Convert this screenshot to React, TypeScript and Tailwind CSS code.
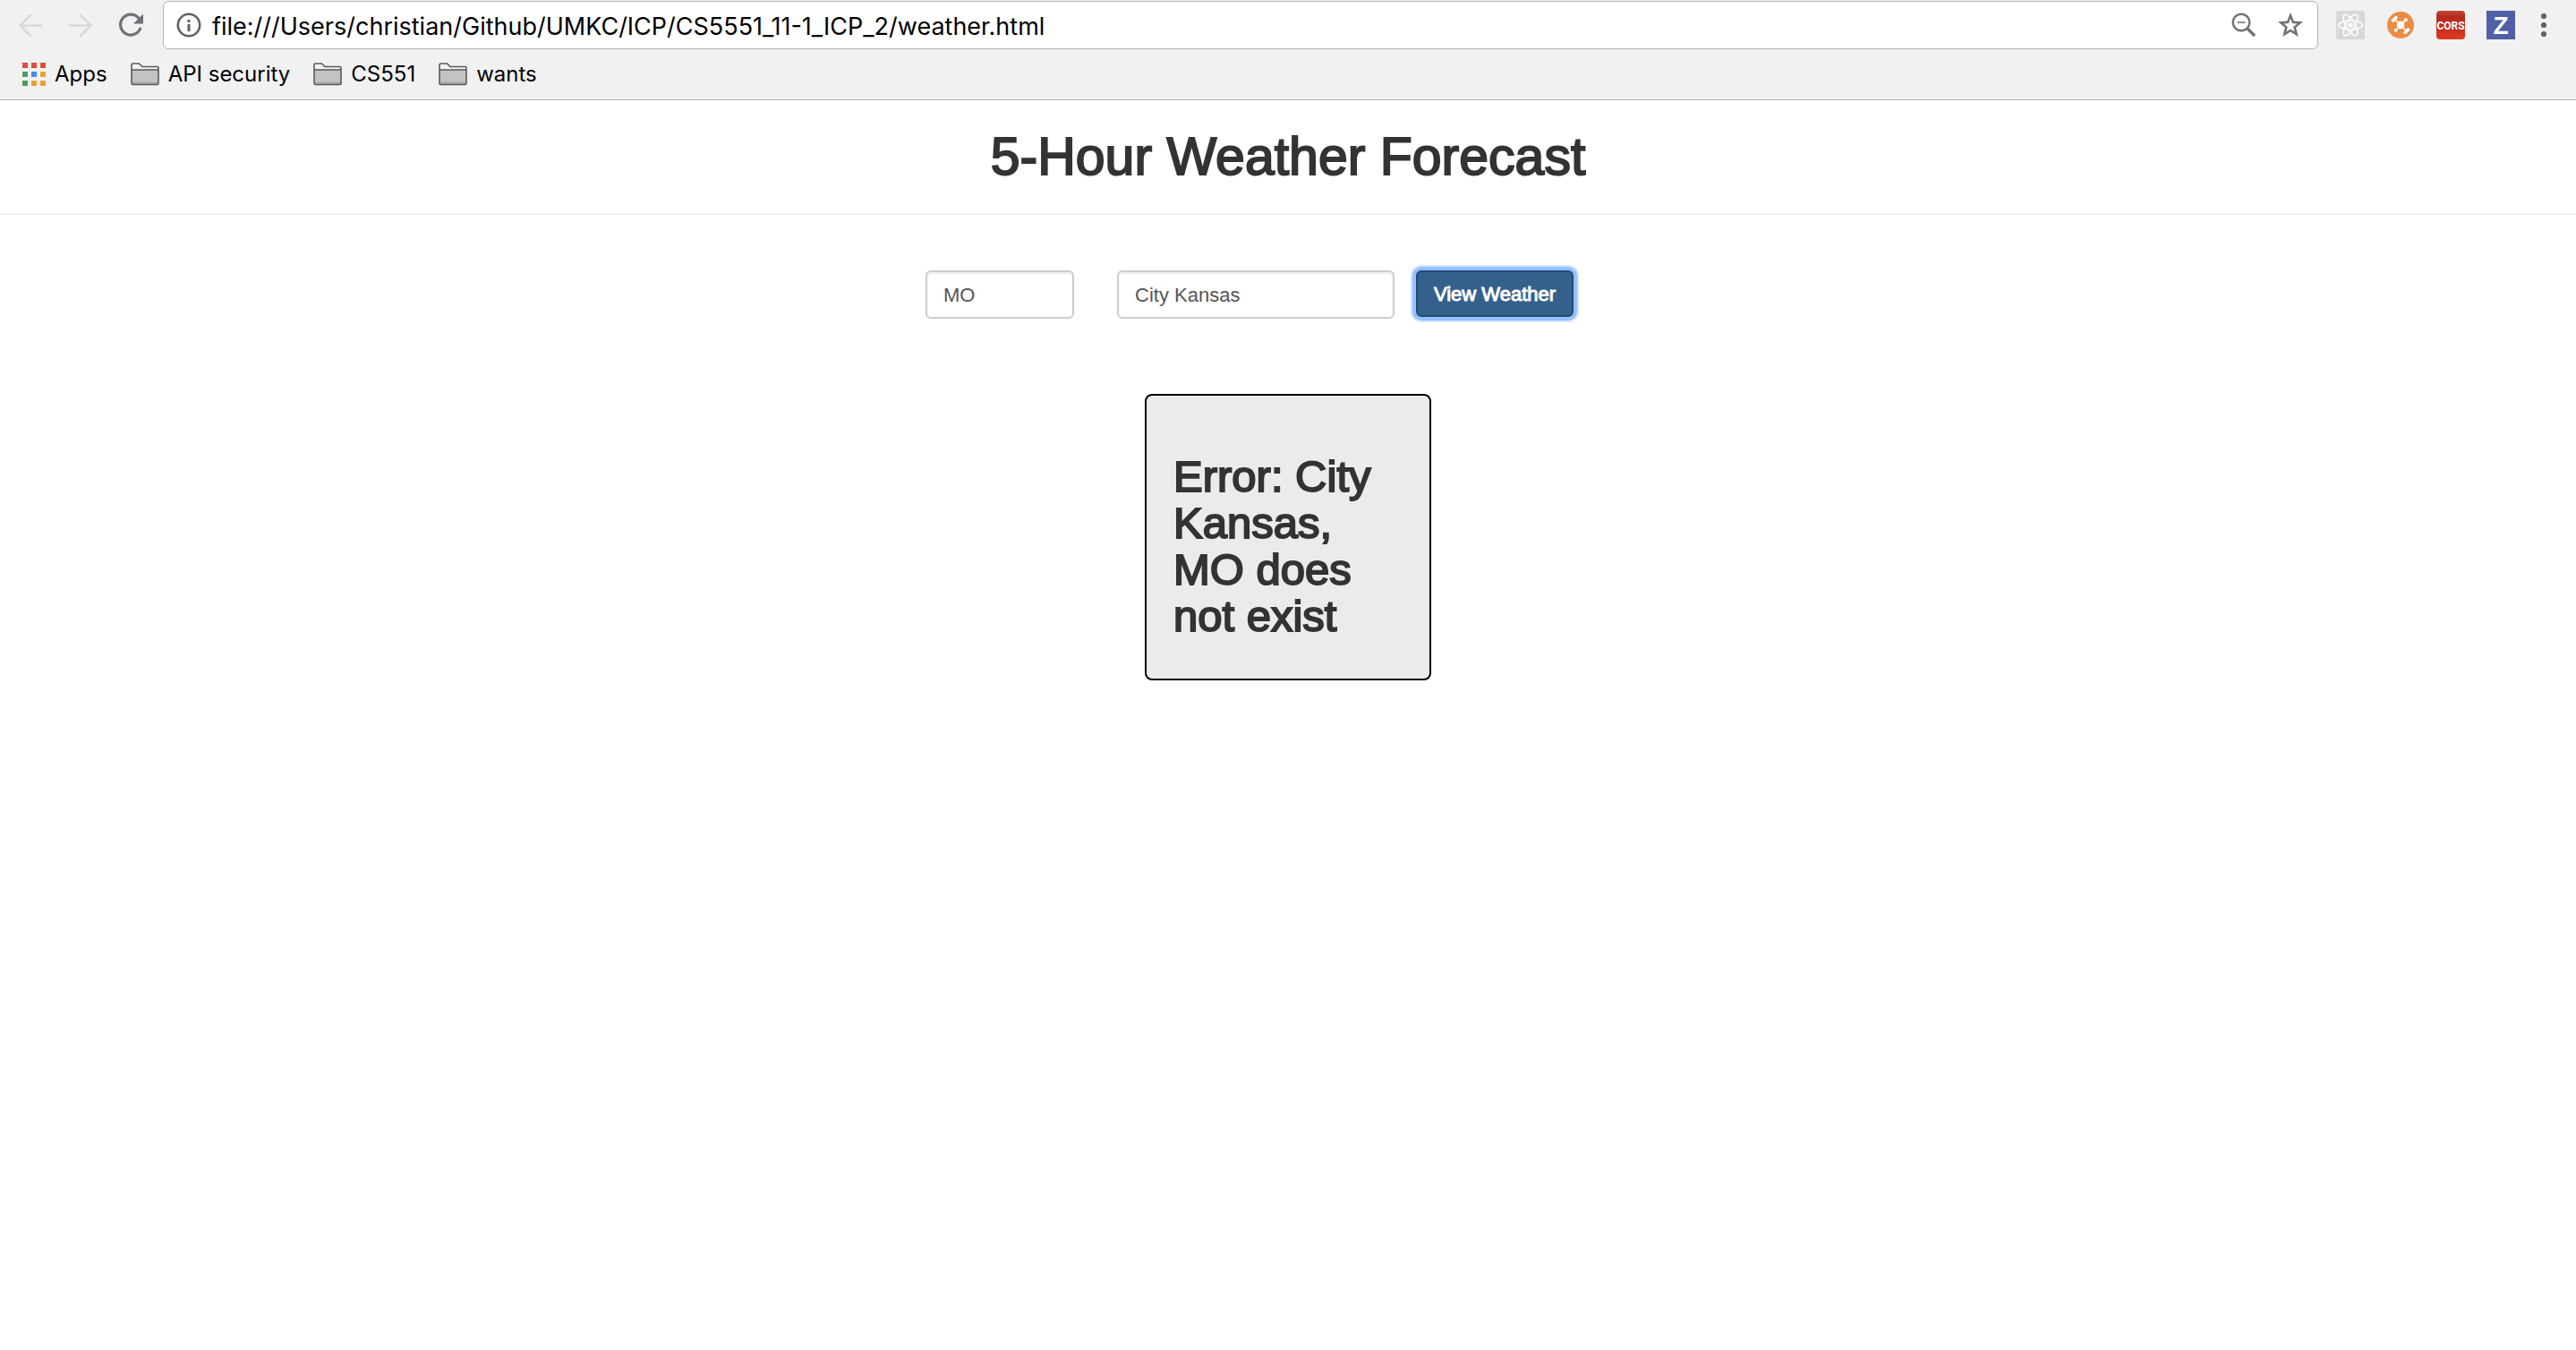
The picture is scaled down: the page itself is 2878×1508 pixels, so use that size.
import type { ReactNode } from 'react';

const uiFont = "font-['Inter','Roboto',sans-serif]";

function BackIcon() {
  return (
    <svg viewBox="0 0 32 32" className="size-8" fill="none" stroke="#d9d9d9" strokeWidth="2.6" aria-hidden="true">
      <path d="M28 16.5H5.5M16 5L4.5 16.5L16 28" strokeLinecap="round" strokeLinejoin="miter" />
    </svg>
  );
}

function ForwardIcon() {
  return (
    <svg viewBox="0 0 32 32" className="size-8" fill="none" stroke="#d9d9d9" strokeWidth="2.6" aria-hidden="true">
      <path d="M4 16.5H26.5M16 5L27.5 16.5L16 28" strokeLinecap="round" strokeLinejoin="miter" />
    </svg>
  );
}

function ReloadIcon() {
  return (
    <svg viewBox="0 0 32 32" className="size-8" fill="none" aria-hidden="true">
      <path d="M24.6 7.8A11.5 11.5 0 1 0 26.6 20.2" stroke="#6e7175" strokeWidth="3.2" strokeLinecap="round" />
      <path d="M30 3.5V14.5H19Z" fill="#6e7175" />
    </svg>
  );
}

function InfoIcon() {
  return (
    <svg viewBox="0 0 28 28" className="size-7 shrink-0" aria-hidden="true">
      <circle cx="14" cy="14" r="12.2" fill="none" stroke="#5f6368" strokeWidth="2.6" />
      <path d="M12.5 8h3v3h-3zM12.5 13h3v8h-3z" fill="#5f6368" />
    </svg>
  );
}

function ZoomOutIcon() {
  return (
    <svg viewBox="0 0 28 28" className="size-7" fill="none" stroke="#6e7175" aria-hidden="true">
      <circle cx="11" cy="11" r="9.3" strokeWidth="2.4" />
      <path d="M6.5 11h9" strokeWidth="1.6" />
      <path d="M17.5 17.5L26 26" strokeWidth="3.4" />
    </svg>
  );
}

function StarIcon() {
  return (
    <svg viewBox="0 0 28 28" className="size-7" fill="#6e7175" fillRule="evenodd" aria-hidden="true">
      <path d="M14 0L17.8 9.4L28 10.2L20.2 16.8L22.7 27L14 21.5L5.3 27L7.8 16.8L0 10.2L10.2 9.4ZM14 6.6L12 12L6.4 12.4L10.8 16L9.4 21.6L14 18.6L18.6 21.6L17.2 16L21.6 12.4L16 12Z" />
    </svg>
  );
}

function ReactIcon() {
  return (
    <svg viewBox="0 0 32 32" className="size-8" aria-hidden="true">
      <rect width="32" height="32" rx="2" fill="#d8d8d8" />
      <g fill="none" stroke="#fff" strokeWidth="1.5">
        <ellipse cx="16" cy="16" rx="13.3" ry="5" />
        <ellipse cx="16" cy="16" rx="13.3" ry="5" transform="rotate(60 16 16)" />
        <ellipse cx="16" cy="16" rx="13.3" ry="5" transform="rotate(120 16 16)" />
      </g>
      <circle cx="16" cy="16" r="2.8" fill="#fff" />
    </svg>
  );
}

function HubIcon() {
  return (
    <svg viewBox="0 0 32 32" className="size-8" aria-hidden="true">
      <circle cx="16" cy="16" r="15" fill="#ec8b42" />
      <g stroke="#fff" fill="none">
        <path d="M9 9L23 23M21.5 10.5L11 21.5" strokeWidth="1.6" />
        <path d="M6.5 12L12 6.5M20 25.5L25.5 20" strokeWidth="3.6" />
      </g>
      <g fill="#fff">
        <circle cx="16" cy="16" r="4.4" />
        <circle cx="21.7" cy="10.3" r="2" />
        <circle cx="10.6" cy="21.7" r="2" />
      </g>
    </svg>
  );
}

function CorsIcon() {
  return (
    <svg viewBox="0 0 32 32" className="size-8" aria-hidden="true">
      <defs>
        <linearGradient id="cors" x1="0" y1="0" x2="0" y2="1">
          <stop offset="0" stopColor="#c9483c" />
          <stop offset="0.2" stopColor="#b52b20" />
          <stop offset="0.6" stopColor="#c22c1e" />
          <stop offset="1" stopColor="#e23a22" />
        </linearGradient>
      </defs>
      <rect width="32" height="32" rx="4" fill="url(#cors)" />
      <text x="16" y="20.5" textAnchor="middle" fill="#fff" className="font-['Liberation_Sans_Narrow','Roboto',sans-serif] text-[12px] font-bold">
        CORS
      </text>
    </svg>
  );
}

function ZIcon() {
  return (
    <svg viewBox="0 0 32 32" className="size-8" aria-hidden="true">
      <rect width="32" height="32" fill="#505fa6" />
      <text x="16" y="26" textAnchor="middle" fill="#fff" className="font-['Liberation_Sans',sans-serif] text-[28px] leading-[32px] font-bold">
        Z
      </text>
    </svg>
  );
}

function MenuIcon() {
  return (
    <svg viewBox="0 0 16 32" className="h-8 w-4" fill="#5f6368" aria-hidden="true">
      <circle cx="8" cy="6" r="3.1" />
      <circle cx="8" cy="16" r="3.1" />
      <circle cx="8" cy="26" r="3.1" />
    </svg>
  );
}

function AppsIcon() {
  const colors = ['#e34b3e', '#e34b3e', '#e34b3e', '#529b5c', '#4489ef', '#e6a335', '#529b5c', '#e6a335', '#e6a335'];
  return (
    <svg viewBox="0 0 26 26" className="size-[26px]" aria-hidden="true">
      {colors.map((color, i) => (
        <rect key={i} x={(i % 3) * 10} y={Math.floor(i / 3) * 10} width="6" height="6" fill={color} />
      ))}
    </svg>
  );
}

function FolderIcon() {
  return (
    <svg viewBox="0 0 32 26" className="h-[26px] w-8" aria-hidden="true">
      <path d="M1 24V2.5Q1 1 2.5 1H9.5L13 4.5H29.5Q31 4.5 31 6V24Z" fill="#f4f4f4" />
      <path d="M1 8H31V24H1Z" fill="#c3c3c3" />
      <path d="M1 21.5H31V24H1Z" fill="#a8a8a8" />
      <path d="M1 23V2.5Q1 1 2.5 1H9.5L13 4.5H29.5Q31 4.5 31 6V23Q31 24.5 29.5 24.5H2.5Q1 24.5 1 23ZM1 8H31" fill="none" stroke="#5a5a5a" strokeWidth="1.6" />
    </svg>
  );
}

function IconButton({ label, children }: { label: string; children: ReactNode }) {
  return (
    <button type="button" aria-label={label} className="shrink-0">
      {children}
    </button>
  );
}

function Bookmark({ icon, children }: { icon: ReactNode; children: ReactNode }) {
  return (
    <a href="#" className="flex items-center gap-2.5">
      {icon}
      <span>{children}</span>
    </a>
  );
}

function BrowserBar() {
  return (
    <header className={`${uiFont} border-b border-[#b4b4b4] bg-[#f1f1f1] text-black`}>
      <div className="flex items-center gap-5 pt-px pr-7 pl-[18px]">
        <nav aria-label="History" className="flex gap-6">
          <IconButton label="Back"><BackIcon /></IconButton>
          <IconButton label="Forward"><ForwardIcon /></IconButton>
          <IconButton label="Reload"><ReloadIcon /></IconButton>
        </nav>
        <div className="flex h-[54px] min-w-0 flex-1 items-center gap-3 rounded-md border border-[#b4b4b4] bg-white pr-4 pl-3.5">
          <InfoIcon />
          <input
            aria-label="Address"
            className="h-full min-w-0 flex-1 pt-0.5 text-[27px] outline-none"
            defaultValue="file:///Users/christian/Github/UMKC/ICP/CS5551_11-1_ICP_2/weather.html"
          />
          <div className="flex gap-6">
            <IconButton label="Zoom"><ZoomOutIcon /></IconButton>
            <IconButton label="Bookmark this page"><StarIcon /></IconButton>
          </div>
        </div>
        <div className="flex gap-6">
          <IconButton label="React Developer Tools"><ReactIcon /></IconButton>
          <IconButton label="Hub"><HubIcon /></IconButton>
          <IconButton label="CORS"><CorsIcon /></IconButton>
          <IconButton label="Zotero"><ZIcon /></IconButton>
          <IconButton label="Menu"><MenuIcon /></IconButton>
        </div>
      </div>
      <nav aria-label="Bookmarks" className="flex h-14 items-center gap-[26px] pl-[25px] text-[24px]">
        <Bookmark icon={<AppsIcon />}>Apps</Bookmark>
        <Bookmark icon={<FolderIcon />}>API security</Bookmark>
        <Bookmark icon={<FolderIcon />}>CS551</Bookmark>
        <Bookmark icon={<FolderIcon />}>wants</Bookmark>
      </nav>
    </header>
  );
}

const field =
  'h-[54px] rounded-md border-2 border-[#ccc] bg-white px-[18px] pt-0.5 text-[22px] text-[#555] shadow-[inset_0_2px_2px_rgba(0,0,0,0.075)] outline-none';

export default function App() {
  return (
    <div className="min-h-screen bg-white font-['Liberation_Sans',Arial,sans-serif] text-[#333]">
      <BrowserBar />
      <main>
        <h1 className="border-b-2 border-[#eee] pt-8 pb-8 text-center text-[59px] leading-[62px] [-webkit-text-stroke:2px_#333]">
          5-Hour Weather Forecast
        </h1>
        <form className="mx-auto mt-[62px] flex max-w-[810px] items-start" onSubmit={(e) => e.preventDefault()}>
          <input aria-label="State" defaultValue="MO" className={`${field} mr-12 w-[166px]`} />
          <input aria-label="City" defaultValue="City Kansas" className={`${field} mr-6 w-[310px]`} />
          <button
            type="submit"
            className="h-[52px] w-[176px] rounded-md border-2 border-[#204d74] bg-[#35608c] text-[22px] whitespace-nowrap text-white shadow-[0_0_0_4px_#94c0fb,0_0_0_6px_#d3e5fd] [-webkit-text-stroke:1px_white]"
          >
            View Weather
          </button>
        </form>
        <section className="mx-auto mt-[84px] h-80 w-80 rounded-lg border-2 border-black bg-[#ebebeb] px-[30px] pt-16">
          <h2 className="text-[49px] leading-[52px] [-webkit-text-stroke:2px_#333]">Error: City Kansas, MO does not exist</h2>
        </section>
      </main>
    </div>
  );
}
